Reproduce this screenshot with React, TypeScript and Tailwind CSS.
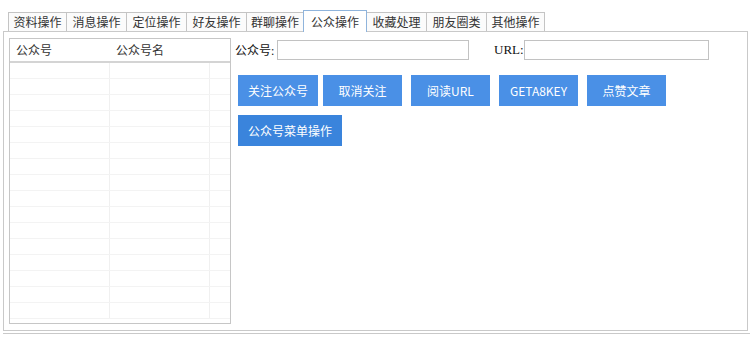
import React from 'react';

const tabs = [
  { label: '资料操作', w: 'w-[59px]' },
  { label: '消息操作', w: 'w-[61px]' },
  { label: '定位操作', w: 'w-[61px]' },
  { label: '好友操作', w: 'w-[61px]' },
  { label: '群聊操作', w: 'w-[58px]' },
  { label: '公众操作', w: 'w-[64px]', active: true },
  { label: '收藏处理', w: 'w-[61px]' },
  { label: '朋友圈类', w: 'w-[61px]' },
  { label: '其他操作', w: 'w-[59px]' }
];

const firstRow = [
  { label: '关注公众号', w: 'w-[80px]', ml: '' },
  { label: '取消关注', w: 'w-[79px]', ml: 'ml-[5px]' },
  { label: '阅读URL', w: 'w-[79px]', ml: 'ml-[9px]' },
  { label: 'GETA8KEY', w: 'w-[79px]', ml: 'ml-[9px]' },
  { label: '点赞文章', w: 'w-[79px]', ml: 'ml-[9px]' }
];

const cjk = "font-[family-name:'Microsoft_YaHei','Noto_Sans_CJK_SC',sans-serif]";

const App: React.FC = () => {
  const rows = Array.from({ length: 16 });

  return (
    <div className={`w-[750px] h-[337px] bg-white overflow-hidden ${cjk}`}>
      {/* tab strip */}
      <div className="mt-[10px] h-[21px] pl-[8px] flex items-end">
        {tabs.map((tab, i) => (
          <div
            key={tab.label}
            className={
              tab.active
                ? `${tab.w} -ml-px h-[22px] mb-[-1px] relative z-10 bg-white border border-b-0 border-[#8fb4dc] flex items-center justify-center text-[12px] text-[#333]`
                : `${tab.w} ${i === 0 ? '' : '-ml-px'} h-[19px] bg-[#fbfbfb] border border-b-0 border-[#c4c4c4] flex items-center justify-center text-[12px] text-[#333]`
            }
          >
            {tab.label}
          </div>
        ))}
      </div>

      {/* tab page */}
      <div className="ml-[3px] w-[745px] h-[300px] border border-[#c9c9c9] flex pl-[5px] pt-[6px]">
        {/* list view */}
        <div className="w-[222px] h-[286px] border border-[#c6c6c6] flex flex-col overflow-hidden">
          <div className="h-[24px] shrink-0 flex items-center border-b-2 border-[#d4d4d4] text-[12px] text-[#333]">
            <span className="w-[100px] pl-[6px]">公众号</span>
            <span className="w-[100px] pl-[6px]">公众号名</span>
          </div>
          <div className="flex flex-col">
            {rows.map((_, i) => (
              <div key={i} className="h-[16px] shrink-0 flex border-b border-[#f3f3f3]">
                <div className="w-[100px] border-r border-[#f0f0f0]" />
                <div className="w-[100px] border-r border-[#f0f0f0]" />
                <div className="flex-1" />
              </div>
            ))}
          </div>
        </div>

        {/* controls */}
        <div className="ml-[4px] pt-[2px] flex flex-col">
          <div className="h-[20px] flex items-center">
            <span className="w-[42px] whitespace-nowrap text-[12px] text-[#111]">
              公众号<span className="font-[family-name:'Liberation_Serif',serif]">:</span>
            </span>
            <input className="w-[192px] h-[20px] border border-[#c2c2c2] bg-white outline-none" />
            <span className="ml-[25px] w-[30px] whitespace-nowrap text-[13px] text-[#111] font-[family-name:'Liberation_Serif',serif]">URL:</span>
            <input className="w-[185px] h-[20px] border border-[#c2c2c2] bg-white outline-none" />
          </div>

          <div className="mt-[15px] ml-[3px] flex">
            {firstRow.map((btn) => (
              <button
                key={btn.label}
                className={`${btn.w} ${btn.ml} h-[31px] bg-[#4a90e6] text-white text-[12px] flex items-center justify-center`}
              >
                {btn.label}
              </button>
            ))}
          </div>
          <div className="mt-[9px] ml-[3px] flex">
            <button className="w-[104px] h-[31px] bg-[#3a84dc] text-white text-[12px] flex items-center justify-center">
              公众号菜单操作
            </button>
          </div>
        </div>
      </div>

      <div className="mt-[2px] ml-[3px] border-t border-[#c9c9c9]" />
    </div>
  );
};

export default App;
